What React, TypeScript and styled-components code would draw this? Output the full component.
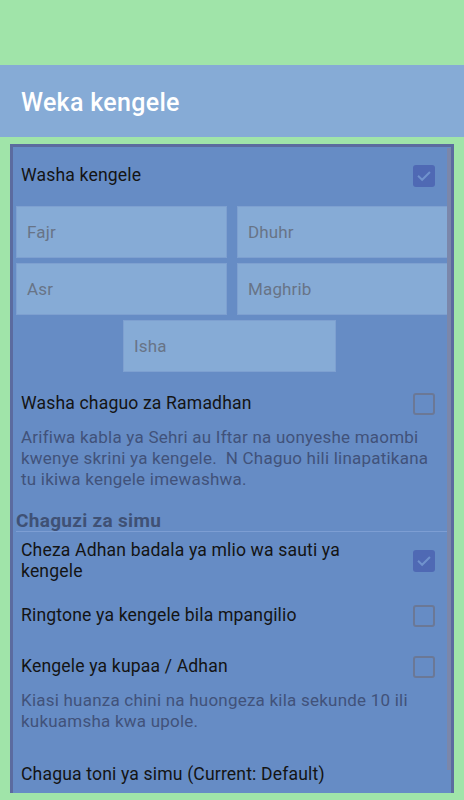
import React from "react";
import styled, { createGlobalStyle } from "styled-components";

const Global = createGlobalStyle`
  html, body { margin: 0; padding: 0; }
  body {
    background: #a0e4a9;
    font-family: Roboto, "Noto Sans", "Liberation Sans", sans-serif;
    width: 464px;
    height: 800px;
    overflow: hidden;
  }
`;

const Screen = styled.div`
  display: flex;
  flex-direction: column;
  height: 800px;
`;

const StatusArea = styled.div`
  height: 65px;
  flex: none;
`;

const AppBar = styled.header`
  height: 72px;
  flex: none;
  box-sizing: border-box;
  background: #86abd6;
  display: flex;
  align-items: center;
  padding: 3px 0 0 21px;
  color: #ffffff;
  font-size: 25px;
  font-weight: 500;
  letter-spacing: 0.3px;
`;

const Panel = styled.section`
  position: relative;
  margin: 7px 10px 0;
  height: 649px;
  border: 3px solid #5b6b9f;
  border-bottom: 0;
  background: #668cc5;
  overflow: hidden;
  padding-top: 3px;
  box-sizing: border-box;
`;

const ScrollThumb = styled.div`
  position: absolute;
  right: 0;
  top: 1px;
  width: 4px;
  height: 622px;
  background: #7b87aa;
`;

const Row = styled.div<{ $pad?: number; $mt?: number }>`
  display: flex;
  align-items: center;
  justify-content: space-between;
  min-height: 51px;
  box-sizing: border-box;
  padding: ${(p) => p.$pad ?? 0}px 16px ${(p) => p.$pad ?? 0}px 8px;
  margin-top: ${(p) => p.$mt ?? 0}px;
  gap: 16px;
`;

const Title = styled.div`
  font-size: 17.6px;
  line-height: 21px;
  letter-spacing: 0.15px;
  color: #141414;
  max-width: 345px;
`;

const Summary = styled.div<{ $mt?: number }>`
  margin-top: ${(p) => p.$mt ?? -2}px;
  padding: 0 12px 0 8px;
  font-size: 17px;
  line-height: 21px;
  letter-spacing: 0.22px;
  color: #41527a;
`;

const Check = styled.div<{ $on?: boolean }>`
  flex: none;
  width: 22px;
  height: 22px;
  box-sizing: border-box;
  border-radius: 3px;
  background: ${(p) => (p.$on ? "#4f69b4" : "transparent")};
  border: ${(p) => (p.$on ? "none" : "2px solid #6b7896")};
  display: flex;
  align-items: center;
  justify-content: center;
`;

const TimeGrid = styled.div`
  display: grid;
  grid-template-columns: 211px 211px;
  column-gap: 10px;
  row-gap: 5px;
  padding: 0 0 0 3px;
  margin-top: 5px;
`;

const TimeBox = styled.div<{ $center?: boolean }>`
  height: 52px;
  box-sizing: border-box;
  background: #86abd6;
  border: 1px solid #7ea0d0;
  display: flex;
  align-items: center;
  padding-left: 10px;
  font-size: 17px;
  letter-spacing: 0.15px;
  color: #687487;
  ${(p) =>
    p.$center
      ? `grid-column: 1 / span 2; justify-self: start; margin-left: 107px; width: 213px;`
      : ""}
`;

const SectionHeader = styled.div`
  margin-top: 20px;
  padding-left: 3px;
  font-size: 19px;
  line-height: 21px;
  font-weight: 700;
  letter-spacing: 0.3px;
  color: #3f5175;
`;

const Divider = styled.div`
  height: 1px;
  margin: 0 0 0 3px;
  background: #7d9ed3;
`;

const CheckMark = () => (
  <svg width="18" height="18" viewBox="0 0 24 24">
    <path
      d="M5 12.5l4.5 4.5L19 7.5"
      fill="none"
      stroke="#7092cd"
      strokeWidth="2.6"
      strokeLinecap="square"
    />
  </svg>
);

const Box = ({ on }: { on?: boolean }) => (
  <Check $on={on}>{on ? <CheckMark /> : null}</Check>
);

export default function App() {
  return (
    <>
      <Global />
      <Screen>
        <StatusArea />
        <AppBar>Weka kengele</AppBar>
        <Panel>
          <ScrollThumb />
          <Row>
            <Title>Washa kengele</Title>
            <Box on />
          </Row>
          <TimeGrid>
            <TimeBox>Fajr</TimeBox>
            <TimeBox>Dhuhr</TimeBox>
            <TimeBox>Asr</TimeBox>
            <TimeBox>Maghrib</TimeBox>
            <TimeBox $center>Isha</TimeBox>
          </TimeGrid>
          <Row $mt={6}>
            <Title>Washa chaguo za Ramadhan</Title>
            <Box />
          </Row>
          <Summary>
            Arifiwa kabla ya Sehri au Iftar na uonyeshe maombi kwenye skrini ya
            kengele.&nbsp; N Chaguo hili linapatikana tu ikiwa kengele
            imewashwa.
          </Summary>
          <SectionHeader>Chaguzi za simu</SectionHeader>
          <Divider />
          <Row $pad={8}>
            <Title>Cheza Adhan badala ya mlio wa sauti ya kengele</Title>
            <Box on />
          </Row>
          <Row>
            <Title>Ringtone ya kengele bila mpangilio</Title>
            <Box />
          </Row>
          <Row>
            <Title>Kengele ya kupaa / Adhan</Title>
            <Box />
          </Row>
          <Summary>
            Kiasi huanza chini na huongeza kila sekunde 10 ili kukuamsha kwa
            upole.
          </Summary>
          <Row $mt={17}>
            <Title>Chagua toni ya simu (Current: Default)</Title>
          </Row>
        </Panel>
      </Screen>
    </>
  );
}
